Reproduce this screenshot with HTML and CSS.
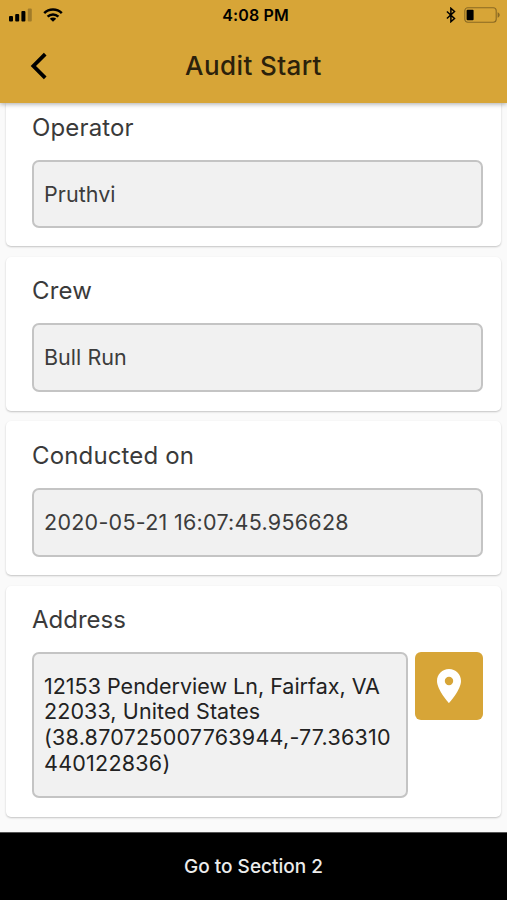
FILE: index.html
```html
<!DOCTYPE html>
<html lang="en">
<head>
<meta charset="utf-8">
<meta name="viewport" content="width=device-width, initial-scale=1">
<title>Audit Start</title>
<link rel="stylesheet" href="styles.css">
</head>
<body>
<div class="screen">
  <header class="header">
    <div class="status">
      <div class="status-left">
        <svg class="signal" width="23" height="14" viewBox="0 0 23 14"><rect x="0" y="8" width="4" height="5.5" rx="1"/><rect x="6.2" y="6" width="4" height="7.5" rx="1"/><rect x="12.4" y="3" width="4" height="10.5" rx="1"/><rect x="18.8" y="0.5" width="4" height="13" rx="1" opacity=".25"/></svg>
        <svg class="wifi" width="20" height="14" viewBox="0 0 20 14"><g fill="none" stroke="#000" stroke-width="2.5"><path d="M1.2 5.1a12.5 12.5 0 0 1 17.6 0"/><path d="M4.6 8.6a7.7 7.7 0 0 1 10.8 0"/></g><path d="M6.8 10.7a4.6 4.6 0 0 1 6.4 0L10 13.8z"/></svg>
      </div>
      <div class="time">4:08 PM</div>
      <div class="status-right">
        <svg width="10" height="16" viewBox="0 0 10 16"><path d="M.9 4.5l7.6 7-3.6 3.2V1.3l3.6 3.2-7.6 7" fill="none" stroke="#000" stroke-width="1.5"/></svg>
        <svg class="battery" width="37" height="16" viewBox="0 0 37 16"><rect x=".8" y=".8" width="31.4" height="14.4" rx="3" fill="none" stroke="#8a6923" stroke-width="1.1"/><rect x="2.6" y="2.8" width="7" height="10.4" rx="1"/><path d="M33.6 5.3c1.4.6 2.1 1.5 2.1 2.7s-.7 2.1-2.1 2.7z" fill="#8a6923"/></svg>
      </div>
    </div>
    <div class="toolbar">
      <svg class="back" width="18" height="28" viewBox="0 0 18 28"><path d="M15.2 2.2L3.4 14l11.8 11.8" fill="none" stroke="#000" stroke-width="3.8"/></svg>
      <h1 class="title">Audit Start</h1>
    </div>
  </header>
  <main class="content">
    <section class="card card-first">
      <h2 class="label">Operator</h2>
      <div class="field short"><span>Pruthvi</span></div>
    </section>
    <section class="card">
      <h2 class="label">Crew</h2>
      <div class="field short tall"><span>Bull Run</span></div>
    </section>
    <section class="card">
      <h2 class="label conducted">Conducted on</h2>
      <div class="field tall"><span>2020-05-21 16:07:45.956628</span></div>
    </section>
    <section class="card card-address">
      <h2 class="label address-label">Address</h2>
      <div class="address-row">
        <div class="field address"><span>12153 Penderview Ln, Fairfax, VA<br><span class="region">22033, United States</span><br><span class="coords">(38.870725007763944,-77.36310<br>440122836)</span></span></div>
        <button class="locate" aria-label="Locate"><svg width="24" height="34" viewBox="0 0 24 34"><path fill="#fff" fill-rule="evenodd" d="M12 0C5.3 0 0 5.2 0 11.9 0 20.8 12 34 12 34s12-13.2 12-22.1C24 5.2 18.7 0 12 0zm0 16.2a4.2 4.2 0 1 1 0-8.4 4.2 4.2 0 0 1 0 8.4z"/></svg></button>
      </div>
    </section>
  </main>
  <footer class="footer"><span>Go to Section 2</span></footer>
</div>
</body>
</html>
```
FILE: styles.css
```css
* { box-sizing: border-box; }
body { margin: 0; font-family: Inter, "Liberation Sans", sans-serif; background: #fafafa; }
.screen { display: flex; flex-direction: column; height: 900px; overflow: hidden; }
.header { flex: none; height: 103px; background: #d7a537; box-shadow: 0 1px 5px rgba(0,0,0,.35); z-index: 1; }
.status { display: grid; grid-template-columns: 1fr auto 1fr; align-items: center; height: 30px; padding: 0 7px 0 9px; }
.status-left, .status-right { display: flex; align-items: center; }
.status-left { gap: 11px; }
.status-right { justify-content: flex-end; gap: 8px; margin-right: -1px; }
.status svg { display: block; }
.time { padding-left: 2px; font-size: 16px; font-weight: 600; letter-spacing: .15px; }
.toolbar { display: grid; grid-template-columns: 1fr auto 1fr; align-items: center; height: 72px; }
.back { margin-left: 30px; }
.title { margin: 0 0 1px; font-size: 26px; font-weight: 450; letter-spacing: .4px; color: #2b210b; }
.content { flex: 1; padding: 0 6px; }
.card { height: 154px; margin-bottom: 10.5px; padding: 19px 18px 0 26px; background: #fff; border-radius: 5px; box-shadow: 0 1px 2px rgba(0,0,0,.22); }
.card-first { height: 143px; padding-top: 10px; border-radius: 0 0 5px 5px; }
.card-address { height: 231px; margin-bottom: 0; }
.label { margin: 0 0 17px; font-size: 24px; line-height: 30px; font-weight: 400; letter-spacing: .15px; color: #3a3a3a; }
.conducted { padding-top: 1px; line-height: 29.5px; }
.address-label { letter-spacing: 0; }
.field { display: flex; align-items: center; height: 68px; padding: 0 10px; border: 2px solid #c4c4c4; border-radius: 7px; background: #f1f1f1; color: #3c3c3c; font-size: 21.5px; letter-spacing: .27px; white-space: nowrap; }
.field > span { padding-bottom: 1px; }
.tall { height: 69px; }
.tall > span { padding-bottom: 0; }
.short { letter-spacing: .04px; }
.address-row { display: flex; gap: 7px; align-items: flex-start; }
.address { flex: 1; height: 146px; line-height: 25.7px; color: #222; letter-spacing: 0; }
.address > span { padding: 1px 0 0; }
.region { letter-spacing: .1px; }
.coords { letter-spacing: .24px; }
.locate { display: flex; align-items: center; justify-content: center; width: 68px; height: 68px; padding: 0; border: 0; border-radius: 6px; background: #d7a537; }
.footer { flex: none; display: flex; align-items: center; justify-content: center; height: 68px; background: #000; border-top: 1px solid #555; color: #ececec; font-size: 19px; font-weight: 450; letter-spacing: 0; }
```
